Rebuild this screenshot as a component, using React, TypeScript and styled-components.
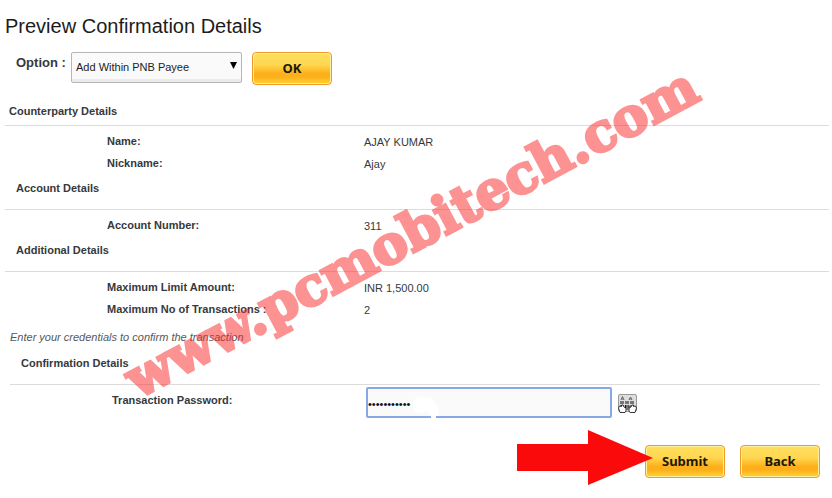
import React from "react";
import styled, { createGlobalStyle } from "styled-components";

const GlobalStyle = createGlobalStyle`
  *, *::before, *::after { box-sizing: border-box; }
  body {
    margin: 0;
    background: #fff;
    color: #36393c;
    font-family: "Liberation Sans", Arial, sans-serif;
    font-size: 11px;
  }
`;

const Page = styled.main`
  position: relative;
  overflow: hidden;
  padding: 0 3px 8px 5px;
`;

const Title = styled.h1`
  margin: 0;
  font-size: 20px;
  font-weight: 400;
  line-height: 52px;
  color: #1c1c1c;
`;

const OptionBar = styled.form`
  display: flex;
  align-items: flex-start;
  padding-left: 11px;
`;

const OptionLabel = styled.label`
  width: 55px;
  font-size: 13px;
  font-weight: 700;
  line-height: 22px;
  white-space: nowrap;
`;

const SelectBox = styled.div`
  position: relative;
  width: 171px;
  margin-right: 10px;
`;

const Select = styled.select`
  appearance: none;
  display: block;
  width: 100%;
  height: 31px;
  padding: 0 20px 2px 4px;
  border: 1px solid #b4b6b8;
  border-radius: 2px;
  background: linear-gradient(#fafafa 0 26px, #ebebeb 26px);
  color: #222;
  font: 11px "Liberation Sans", Arial, sans-serif;
`;

const Caret = styled.svg`
  position: absolute;
  top: 10px;
  right: 5px;
  width: 7px;
  height: 7px;
  pointer-events: none;
`;

const GoldButton = styled.button`
  width: 80px;
  height: 33px;
  padding: 0 0 2px;
  border: 1px solid #f09a28;
  border-radius: 4px;
  background: linear-gradient(#ffdf60 0%, #ffd750 38%, #ffc433 52%, #fdb01c 66%, #fdb01c 78%, #ffc72c 92%);
  box-shadow: inset 0 0 0 1px #fff0a0;
  color: #1c1808;
  font: 700 13px "Noto Sans", "Open Sans", sans-serif;
`;

const SectionTitle = styled.h2<{ $first?: boolean; $indent?: number }>`
  margin: 0;
  padding: ${(p) => (p.$first ? "16px 0 4px" : "4px 0 11px")};
  padding-left: ${(p) => p.$indent ?? 11}px;
  border-bottom: 1px solid #dcdcdc;
  font-size: 11px;
  font-weight: 700;
  line-height: 20px;
`;

const Details = styled.dl`
  margin: 0;
  padding: 4px 0 0 102px;
`;

const DetailRow = styled.div`
  display: grid;
  grid-template-columns: 257px 1fr;
  line-height: 22px;
`;

const Term = styled.dt`
  font-weight: 700;
`;

const Value = styled.dd`
  margin: 0;
  padding-top: 2px;
  line-height: 20px;
`;

const Confirmation = styled.form`
  padding: 7px 9px 0 5px;
`;

const Note = styled.p`
  margin: 0 0 2px;
  font-style: italic;
  line-height: 20px;
  color: #55585b;
`;

const PasswordRow = styled.div`
  display: grid;
  grid-template-columns: 254px 246px auto;
  align-items: start;
  padding: 2px 0 0 102px;
`;

const PasswordLabel = styled.label`
  font-weight: 700;
  line-height: 26px;
`;

const PasswordBox = styled.div`
  position: relative;
`;

const PasswordInput = styled.input`
  display: block;
  width: 100%;
  height: 31px;
  padding: 3px 0 0;
  border: 2px solid #86a9e6;
  border-radius: 2px;
  outline: none;
  background: #fafafa;
  color: #111;
  font: 11px "Liberation Sans", Arial, sans-serif;
`;

const Smudge = styled.svg`
  position: absolute;
  bottom: 0;
  left: 46px;
  width: 28px;
  height: 22px;
  pointer-events: none;
`;

const KeyboardButton = styled.button`
  width: 20px;
  height: 20px;
  margin: 7px 0 0 5px;
  padding: 0;
  border: 0;
  background: none;

  svg { display: block; }
`;

const Actions = styled.div`
  display: flex;
  justify-content: flex-end;
  align-items: flex-start;
  gap: 15px;
  padding: 27px 0 0;
`;

const SubmitSlot = styled.div`
  position: relative;
`;

const Arrow = styled.svg`
  position: absolute;
  top: -15px;
  right: 72px;
  width: 136px;
  height: 56px;
  pointer-events: none;
`;

const Watermark = styled.svg`
  position: absolute;
  top: 0;
  left: 0;
  width: 832px;
  height: 498px;
  pointer-events: none;
  opacity: 0.5;

  text {
    fill: #fa2828;
    stroke: #fa2828;
    stroke-width: 3px;
    font: 700 53px "DejaVu Serif", serif;
  }
`;

type Detail = [label: string, value: string];

const sections: { title: string; indent?: number; rows: Detail[] }[] = [
  { title: "Counterparty Details", indent: 4, rows: [["Name:", "AJAY KUMAR"], ["Nickname:", "Ajay"]] },
  { title: "Account Details", rows: [["Account Number:", "311"]] },
  {
    title: "Additional Details",
    rows: [["Maximum Limit Amount:", "INR 1,500.00"], ["Maximum No of Transactions :", "2"]],
  },
];

function KeyboardIcon() {
  return (
    <svg width="20" height="20" viewBox="0 0 20 20" aria-hidden="true">
      <rect x="1.500" y="0.500" width="18" height="17" rx="1.500" fill="#dedede" stroke="#999" />
      <path d="M4 6 5.500 2.500 7 6M4.500 5h2M12 6l1.500-3L15 6M12.500 5h2" fill="none" stroke="#666" />
      <path d="M3 7h4v3H3zM8 7h4v3H8zM13 7h4v3h-4zM3 11h4v3H3zM8 11h4v3H8zM13 11h4v3h-4z" fill="#777" />
      <path
        d="M3 18.500 1.500 14l1-2 2 .5V11h1.500l1 2 2 1v3l-1 1.500zM18 18.500l1.500-4.500-1-2-2 .5V11H15l-1 2-2 1v3l1 1.500z"
        fill="#fff"
        stroke="#222"
        strokeWidth="0.9"
      />
      <path d="M8.500 11v3M9.500 15h2M12 11.500v2" stroke="#111" />
    </svg>
  );
}

export default function App() {
  return (
    <>
      <GlobalStyle />
      <Page>
        <Title>Preview Confirmation Details</Title>
        <OptionBar onSubmit={(e) => e.preventDefault()}>
          <OptionLabel htmlFor="option">Option :</OptionLabel>
          <SelectBox>
            <Select id="option">
              <option>Add Within PNB Payee</option>
            </Select>
            <Caret viewBox="0 0 7 7" aria-hidden="true">
              <path d="M0 0h7L3.500 7z" fill="#000" />
            </Caret>
          </SelectBox>
          <GoldButton type="submit">OK</GoldButton>
        </OptionBar>

        {sections.map((s, i) => (
          <section key={s.title}>
            <SectionTitle $first={i === 0} $indent={s.indent}>{s.title}</SectionTitle>
            <Details>
              {s.rows.map(([label, value]) => (
                <DetailRow key={label}>
                  <Term>{label}</Term>
                  <Value>{value}</Value>
                </DetailRow>
              ))}
            </Details>
          </section>
        ))}

        <Confirmation onSubmit={(e) => e.preventDefault()}>
          <Note>Enter your credentials to confirm the transaction</Note>
          <SectionTitle>Confirmation Details</SectionTitle>
          <PasswordRow>
            <PasswordLabel htmlFor="password">Transaction Password:</PasswordLabel>
            <PasswordBox>
              <PasswordInput id="password" type="password" defaultValue="abcdefghijk" />
              <Smudge viewBox="0 0 28 22" aria-hidden="true">
                <path
                  d="M3 3c3-3 8-3 11-1 4-1 8 1 9 5 4 2 5 8 3 13h-2v2h-5v-3c-2-1-3-3-4-5-4 4-9 4-12 0-3-3-3-8 0-11z"
                  fill="#fff"
                />
              </Smudge>
            </PasswordBox>
            <KeyboardButton type="button" aria-label="Virtual keyboard">
              <KeyboardIcon />
            </KeyboardButton>
          </PasswordRow>
          <Actions>
            <SubmitSlot>
              <GoldButton type="submit">Submit</GoldButton>
              <Arrow viewBox="0 0 136 56" aria-hidden="true">
                <path d="M0 14h71V0l65 28-65 27V41H0z" fill="#fa0a0a" />
              </Arrow>
            </SubmitSlot>
            <GoldButton type="button">Back</GoldButton>
          </Actions>
        </Confirmation>

        <Watermark viewBox="0 0 832 498" aria-hidden="true">
          <text transform="translate(138 399) rotate(-28)">www.pcmobitech.com</text>
        </Watermark>
      </Page>
    </>
  );
}
